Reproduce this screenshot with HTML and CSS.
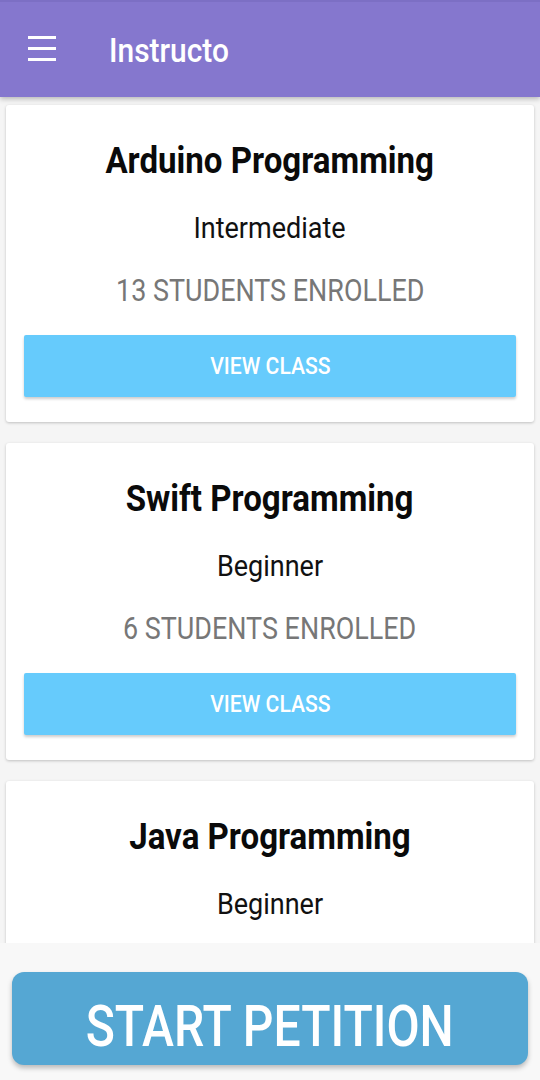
FILE: index.html
```html
<!DOCTYPE html>
<html>
<head>
<meta charset="utf-8">
<link rel="stylesheet" href="styles.css">
</head>
<body>
<div class="app">
  <header class="topbar">
    <button class="menu" aria-label="menu">
      <span class="bar"></span><span class="bar"></span><span class="bar"></span>
    </button>
    <h1 class="brand"><span class="sq">Instructo</span></h1>
  </header>
  <main class="list">
    <section class="card">
      <h2 class="title"><span class="sq">Arduino Programming</span></h2>
      <p class="level"><span class="sq">Intermediate</span></p>
      <p class="enrolled"><span class="sq">13 STUDENTS ENROLLED</span></p>
      <button class="view"><span class="sq">VIEW CLASS</span></button>
    </section>
    <section class="card">
      <h2 class="title"><span class="sq">Swift Programming</span></h2>
      <p class="level"><span class="sq">Beginner</span></p>
      <p class="enrolled"><span class="sq">6 STUDENTS ENROLLED</span></p>
      <button class="view"><span class="sq">VIEW CLASS</span></button>
    </section>
    <section class="card card-cut">
      <h2 class="title"><span class="sq">Java Programming</span></h2>
      <p class="level"><span class="sq">Beginner</span></p>
    </section>
  </main>
  <footer class="footer">
    <button class="petition"><span class="sq sq-wide">START PETITION</span></button>
  </footer>
</div>
</body>
</html>
```
FILE: styles.css
```css
* { box-sizing: border-box; }
html, body { margin: 0; padding: 0; }
body {
  width: 540px;
  height: 1080px;
  overflow: hidden;
  background: #f8f8f8;
  font-family: Roboto, "Liberation Sans", sans-serif;
}
.app {
  height: 1080px;
  display: flex;
  flex-direction: column;
}
.sq {
  display: inline-block;
  transform: scaleX(0.88);
  white-space: nowrap;
}
.topbar {
  height: 97px;
  flex: 0 0 97px;
  background: #8577ce;
  border-top: 2px solid #7c6fc4;
  display: flex;
  align-items: center;
  padding-left: 28px;
  box-shadow: 0 2px 5px rgba(0,0,0,0.25);
  position: relative;
  z-index: 2;
}
.menu {
  width: 28px;
  height: 25px;
  padding: 0;
  border: 0;
  background: none;
  display: flex;
  flex-direction: column;
  justify-content: space-between;
  margin-top: -2px;
}
.bar {
  display: block;
  width: 28px;
  height: 3px;
  background: #fff;
}
.brand {
  margin: 0 0 0 53px;
  font-size: 34px;
  font-weight: 500;
  color: #fff;
  line-height: 40px;
}
.brand .sq { transform-origin: left center; }
.list {
  flex: 1 1 auto;
  overflow: hidden;
  background: #f5f5f5;
  padding: 8px 6px 0;
  display: flex;
  flex-direction: column;
  gap: 21px;
}
.card {
  flex: 0 0 auto;
  background: #fff;
  border-radius: 3px;
  box-shadow: 0 1px 3px rgba(0,0,0,0.22);
  padding: 33px 18px 25px;
  display: flex;
  flex-direction: column;
  align-items: stretch;
  text-align: center;
}
.card-cut { padding-bottom: 40px; }
.title {
  margin: 0;
  font-size: 37.6px;
  font-weight: 700;
  line-height: 44px;
  color: #0a0a0a;
}
.level {
  margin: 28px 0 0;
  font-size: 30px;
  line-height: 36px;
  color: #111;
}
.level .sq { transform: scaleX(0.9); }
.enrolled {
  margin: 27px 0 0;
  font-size: 30.6px;
  line-height: 36px;
  color: #777;
}
.view {
  margin-top: 26px;
  height: 62px;
  border: 0;
  border-radius: 2px;
  background: #66cbfc;
  color: #fff;
  font-family: inherit;
  font-size: 24px;
  font-weight: 500;
  box-shadow: 0 2px 3px rgba(0,0,0,0.2);
}
.footer {
  flex: 0 0 137px;
  background: #f8f8f8;
  padding: 29px 12px 15px;
}
.petition {
  width: 100%;
  height: 93px;
  border: 0;
  border-radius: 12px;
  background: #55a7d3;
  color: #fff;
  font-family: inherit;
  font-size: 58px;
  font-weight: 500;
  line-height: 66px;
  padding: 14px 0 0;
  box-shadow: 0 3px 5px rgba(0,0,0,0.25);
}
.sq-wide { transform: scaleX(0.83); }
```
